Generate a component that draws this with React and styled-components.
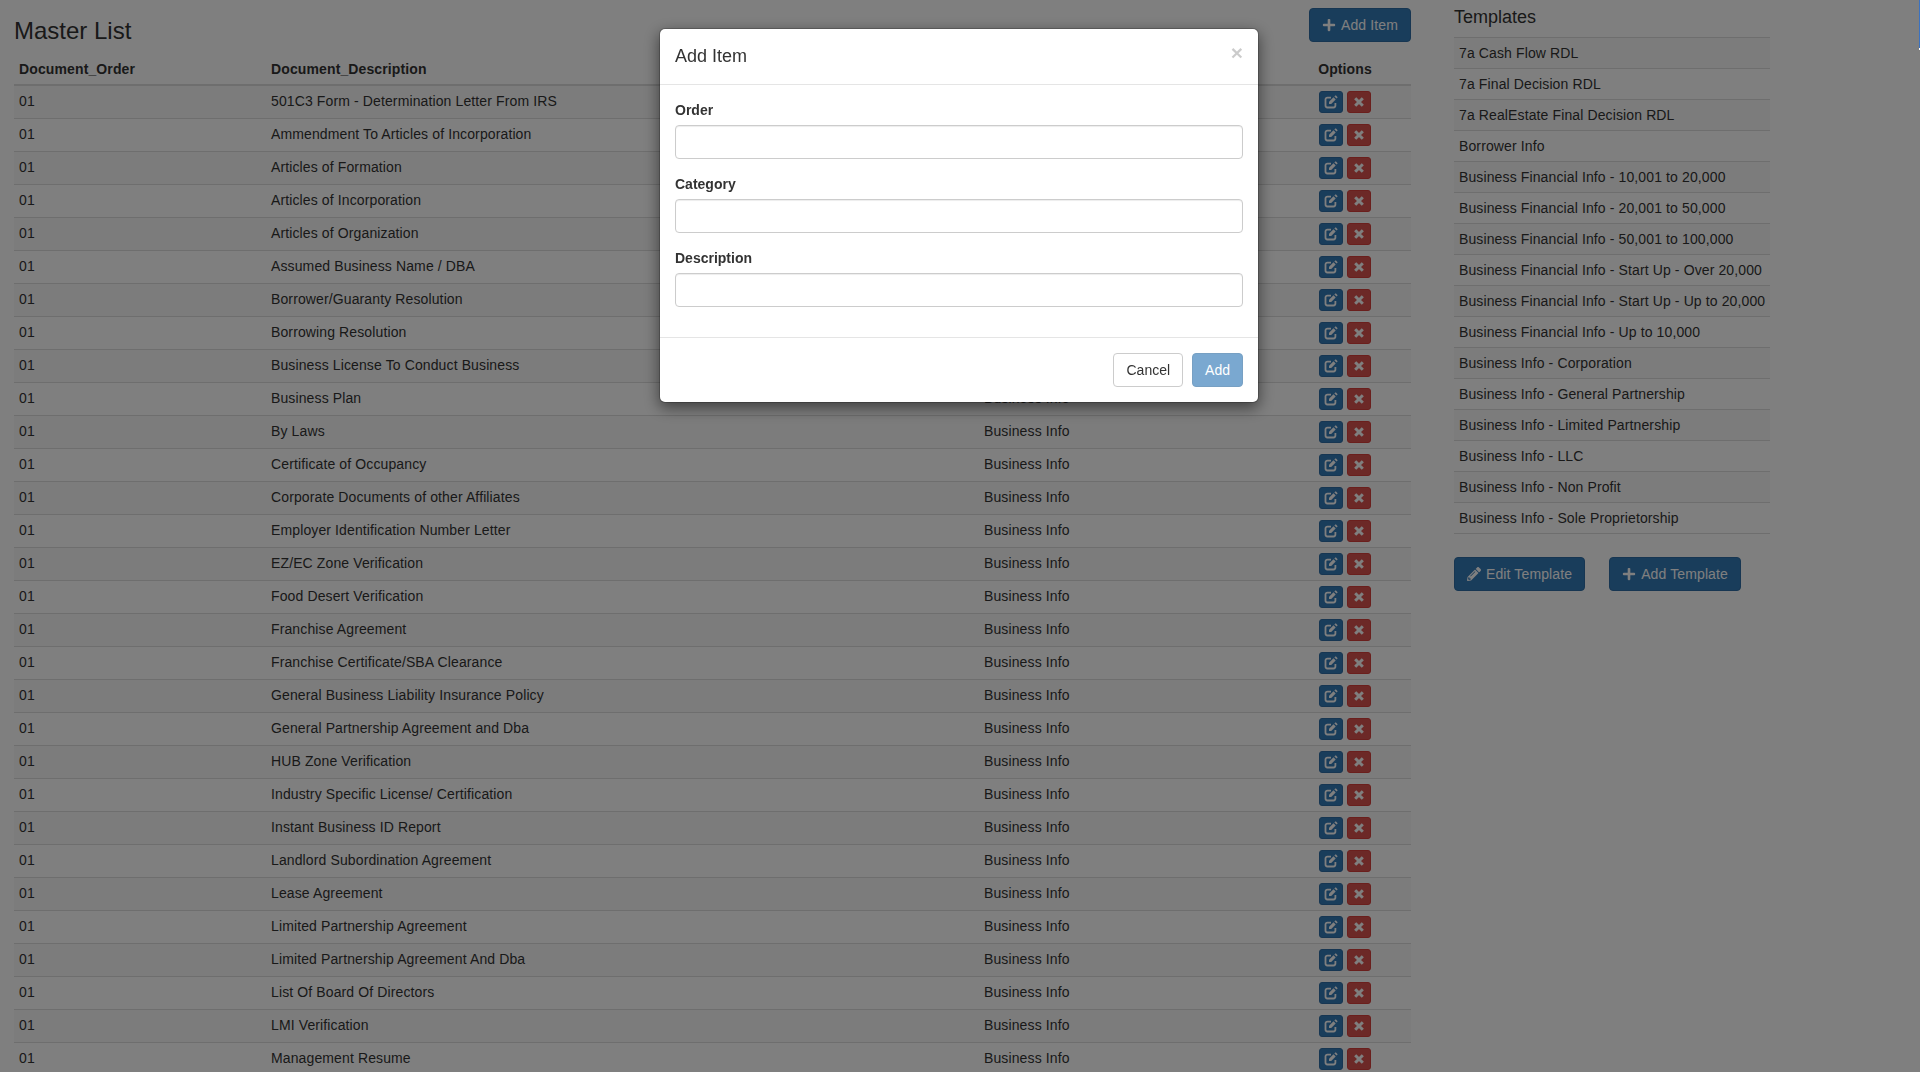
import React from 'react'
import styled, { createGlobalStyle } from 'styled-components'
import { FaPlus, FaPencilAlt } from 'react-icons/fa'

const GlobalStyle = createGlobalStyle`
    html, body {
        margin: 0;
        height: 100%;
        overflow: hidden;
        background: #fff;
    }
    body {
        font-family: "Liberation Sans", Arial, sans-serif;
        font-size: 14px;
        line-height: 20px;
        letter-spacing: 0.12px;
        color: #333;
    }
    * {
        box-sizing: border-box;
    }
`

const Page = styled.div`
    display: flex;
    align-items: flex-start;
    gap: 43px;
    padding-left: 14px;
`

const MainColumn = styled.div`
    flex: 0 0 1397px;
`

const ListHeader = styled.div`
    display: flex;
    justify-content: space-between;
    align-items: flex-start;
    height: 53px;
    padding-top: 8px;
`

const PageTitle = styled.h2`
    margin: 0;
    padding-top: 8px;
    font-size: 24px;
    line-height: 30px;
    font-weight: 400;
    letter-spacing: 0;
`

const Button = styled.button`
    display: inline-flex;
    align-items: center;
    gap: ${props => props.$wide ? '5px' : '4px'};
    height: 34px;
    padding: 6px 12px;
    font: inherit;
    letter-spacing: inherit;
    color: #fff;
    background: #337ab7;
    border: 1px solid #2e6da4;
    border-radius: 4px;

    svg {
        width: 14px;
        height: 14px;
    }
`

const Table = styled.table`
    width: 100%;
    table-layout: fixed;
    border-collapse: collapse;
    border-spacing: 0;
`

const HeadCell = styled.th`
    width: ${props => props.$width || 'auto'};
    padding: 6px 5px 5px;
    font-weight: 700;
    letter-spacing: 0.12px;
    text-align: ${props => props.$center ? 'center' : 'left'};
    border-bottom: 2px solid #ddd;
`

const Row = styled.tr`
    &:nth-child(odd) {
        background: #f9f9f9;
    }
`

const Cell = styled.td`
    padding: 5px;
    vertical-align: top;
    border-top: 1px solid #ddd;
    text-align: ${props => props.$center ? 'center' : 'left'};
`

const ActionGroup = styled.div`
    display: flex;
    justify-content: center;
    gap: 4px;
`

const ActionButton = styled.button`
    display: flex;
    align-items: center;
    justify-content: center;
    width: 24px;
    height: 22px;
    padding: 0;
    color: #fff;
    background: ${props => props.$danger ? '#d9534f' : '#337ab7'};
    border: 1px solid ${props => props.$danger ? '#d43f3a' : '#2e6da4'};
    border-radius: 3px;
`

const SideColumn = styled.aside`
    flex: 0 0 315px;
`

const SideTitle = styled.h4`
    margin: 0;
    padding-top: 7px;
    height: 37px;
    font-size: 18px;
    line-height: 20px;
    font-weight: 400;
    letter-spacing: 0;
`

const TemplateItem = styled.div`
    height: 31px;
    padding: 5px;
    border-top: 1px solid #ddd;
    white-space: nowrap;

    &:nth-child(odd) {
        background: #f9f9f9;
    }
`

const TemplateList = styled.div`
    border-bottom: 1px solid #ddd;
`

const SideActions = styled.div`
    display: flex;
    gap: 24px;
    margin-top: 23px;
`

const Backdrop = styled.div`
    position: fixed;
    inset: 0;
    background: rgba(0, 0, 0, 0.5);
`

const EdgeMark = styled.div`
    position: fixed;
    top: 0;
    right: 0;
    width: 1px;
    height: 50px;
    background: linear-gradient(#3b72c0 48px, #fff 48px);
`

const Modal = styled.div`
    position: fixed;
    top: 28px;
    left: 659px;
    width: 600px;
    letter-spacing: 0;
    background: #fff;
    border: 1px solid rgba(0, 0, 0, 0.2);
    border-radius: 6px;
    background-clip: padding-box;
    box-shadow: 0 5px 15px rgba(0, 0, 0, 0.5);
`

const ModalHeader = styled.div`
    position: relative;
    padding: 15px;
    border-bottom: 1px solid #e5e5e5;
`

const ModalTitle = styled.h4`
    margin: 0;
    font-size: 18px;
    line-height: 25px;
    font-weight: 400;
`

const CloseButton = styled.span`
    position: absolute;
    top: 13px;
    right: 15px;
    font-size: 21px;
    line-height: 21px;
    font-weight: 700;
    color: #000;
    opacity: 0.2;
`

const ModalBody = styled.div`
    padding: 15px 15px 0;
`

const FormGroup = styled.div`
    margin-bottom: 15px;
`

const Label = styled.label`
    display: block;
    margin-bottom: 5px;
    font-weight: 700;
`

const Input = styled.input`
    display: block;
    width: 100%;
    height: 34px;
    padding: 6px 12px;
    font: inherit;
    border: 1px solid #ccc;
    border-radius: 4px;
    box-shadow: inset 0 1px 1px rgba(0, 0, 0, 0.075);
`

const ModalFooter = styled.div`
    display: flex;
    justify-content: flex-end;
    gap: 9px;
    margin-top: 30px;
    padding: 15px;
    border-top: 1px solid #e5e5e5;
`

const CancelButton = styled(Button)`
    color: #333;
    background: #fff;
    border-color: #ccc;
`

const DisabledButton = styled(Button)`
    opacity: 0.65;
`

const EditIcon = () => (
    <svg width="14" height="14" viewBox="0 0 14 14" fill="none" stroke="currentColor" strokeWidth="1.8">
        <path d="M7 2.6H3.4A1.9 1.9 0 0 0 1.5 4.5v6.1a1.9 1.9 0 0 0 1.9 1.9h6.1a1.9 1.9 0 0 0 1.9-1.9V8" />
        <path d="M5 6.8V9h2.2L11.7 4.5 9.5 2.3z" fill="currentColor" stroke="none" />
        <path d="M10.4 1.4l.8-.8a.6.6 0 0 1 .8 0l1.4 1.4a.6.6 0 0 1 0 .8l-.8.8z" fill="currentColor" stroke="none" />
    </svg>
)

const RemoveIcon = () => (
    <svg width="10" height="10" viewBox="0 0 10 10" fill="none" stroke="currentColor" strokeWidth="3">
        <path d="M1.2 1.2l7.6 7.6M8.8 1.2L1.2 8.8" />
    </svg>
)

const documents = [
    '501C3 Form - Determination Letter From IRS',
    'Ammendment To Articles of Incorporation',
    'Articles of Formation',
    'Articles of Incorporation',
    'Articles of Organization',
    'Assumed Business Name / DBA',
    'Borrower/Guaranty Resolution',
    'Borrowing Resolution',
    'Business License To Conduct Business',
    'Business Plan',
    'By Laws',
    'Certificate of Occupancy',
    'Corporate Documents of other Affiliates',
    'Employer Identification Number Letter',
    'EZ/EC Zone Verification',
    'Food Desert Verification',
    'Franchise Agreement',
    'Franchise Certificate/SBA Clearance',
    'General Business Liability Insurance Policy',
    'General Partnership Agreement and Dba',
    'HUB Zone Verification',
    'Industry Specific License/ Certification',
    'Instant Business ID Report',
    'Landlord Subordination Agreement',
    'Lease Agreement',
    'Limited Partnership Agreement',
    'Limited Partnership Agreement And Dba',
    'List Of Board Of Directors',
    'LMI Verification',
    'Management Resume',
]

const templates = [
    '7a Cash Flow RDL',
    '7a Final Decision RDL',
    '7a RealEstate Final Decision RDL',
    'Borrower Info',
    'Business Financial Info - 10,001 to 20,000',
    'Business Financial Info - 20,001 to 50,000',
    'Business Financial Info - 50,001 to 100,000',
    'Business Financial Info - Start Up - Over 20,000',
    'Business Financial Info - Start Up - Up to 20,000',
    'Business Financial Info - Up to 10,000',
    'Business Info - Corporation',
    'Business Info - General Partnership',
    'Business Info - Limited Partnership',
    'Business Info - LLC',
    'Business Info - Non Profit',
    'Business Info - Sole Proprietorship',
]

const App = () => {
    return (
        <>
            <GlobalStyle />
            <Page>
                <MainColumn>
                    <ListHeader>
                        <PageTitle>Master List</PageTitle>
                        <Button $wide><FaPlus />Add Item</Button>
                    </ListHeader>
                    <Table>
                        <thead>
                            <tr>
                                <HeadCell $width="252px">Document_Order</HeadCell>
                                <HeadCell $width="713px">Document_Description</HeadCell>
                                <HeadCell $width="300px">Document_Category</HeadCell>
                                <HeadCell $center>Options</HeadCell>
                            </tr>
                        </thead>
                        <tbody>
                            {documents.map(doc => (
                                <Row key={doc}>
                                    <Cell>01</Cell>
                                    <Cell>{doc}</Cell>
                                    <Cell>Business Info</Cell>
                                    <Cell $center>
                                        <ActionGroup>
                                            <ActionButton><EditIcon /></ActionButton>
                                            <ActionButton $danger><RemoveIcon /></ActionButton>
                                        </ActionGroup>
                                    </Cell>
                                </Row>
                            ))}
                        </tbody>
                    </Table>
                </MainColumn>
                <SideColumn>
                    <SideTitle>Templates</SideTitle>
                    <TemplateList>
                        {templates.map(name => (
                            <TemplateItem key={name}>{name}</TemplateItem>
                        ))}
                    </TemplateList>
                    <SideActions>
                        <Button $wide><FaPencilAlt />Edit Template</Button>
                        <Button $wide><FaPlus />Add Template</Button>
                    </SideActions>
                </SideColumn>
            </Page>
            <Backdrop />
            <EdgeMark />
            <Modal>
                <ModalHeader>
                    <ModalTitle>Add Item</ModalTitle>
                    <CloseButton>×</CloseButton>
                </ModalHeader>
                <ModalBody>
                    <FormGroup>
                        <Label>Order</Label>
                        <Input />
                    </FormGroup>
                    <FormGroup>
                        <Label>Category</Label>
                        <Input />
                    </FormGroup>
                    <FormGroup>
                        <Label>Description</Label>
                        <Input />
                    </FormGroup>
                </ModalBody>
                <ModalFooter>
                    <CancelButton>Cancel</CancelButton>
                    <DisabledButton>Add</DisabledButton>
                </ModalFooter>
            </Modal>
        </>
    )
}

export default App
